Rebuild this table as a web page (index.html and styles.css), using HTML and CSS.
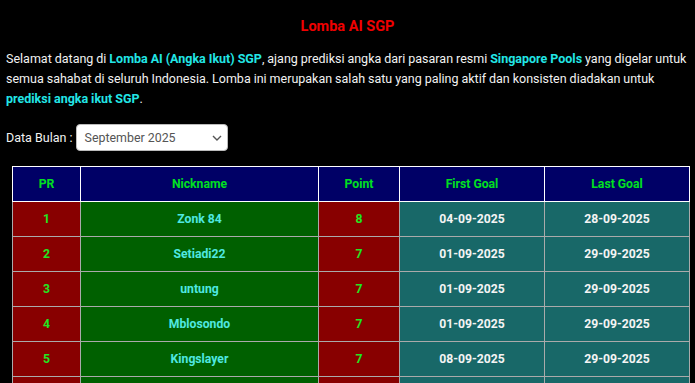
FILE: index.html
```html
<!DOCTYPE html>
<html>
<head>
<meta charset="utf-8">
<link rel="stylesheet" href="styles.css">
</head>
<body>
<div class="page">
  <h1 class="title">Lomba AI SGP</h1>
  <p class="intro">Selamat datang di <b class="hl">Lomba AI (Angka Ikut) SGP</b>, ajang prediksi angka dari pasaran resmi <b class="hl">Singapore Pools</b> yang digelar untuk semua sahabat di seluruh Indonesia. Lomba ini merupakan salah satu yang paling aktif dan konsisten diadakan untuk <b class="hl">prediksi angka ikut SGP</b>.</p>
  <div class="filter">
    <label class="filter-label">Data Bulan :</label>
    <div class="select">
      <span class="select-text">September 2025</span>
      <svg class="chev" width="10" height="6" viewBox="0 0 10 6"><path d="M1 1l4 4 4-4" fill="none" stroke="#555" stroke-width="1.4"/></svg>
    </div>
  </div>
  <table class="rank">
    <thead>
      <tr><th class="c-pr">PR</th><th class="c-nick">Nickname</th><th class="c-pt">Point</th><th class="c-goal">First Goal</th><th class="c-goal">Last Goal</th></tr>
    </thead>
    <tbody>
      <tr><td class="red lime">1</td><td class="green cyan">Zonk 84</td><td class="red lime">8</td><td class="teal white">04-09-2025</td><td class="teal white">28-09-2025</td></tr>
      <tr><td class="red lime">2</td><td class="green cyan">Setiadi22</td><td class="red lime">7</td><td class="teal white">01-09-2025</td><td class="teal white">29-09-2025</td></tr>
      <tr><td class="red lime">3</td><td class="green cyan">untung</td><td class="red lime">7</td><td class="teal white">01-09-2025</td><td class="teal white">29-09-2025</td></tr>
      <tr><td class="red lime">4</td><td class="green cyan">Mblosondo</td><td class="red lime">7</td><td class="teal white">01-09-2025</td><td class="teal white">29-09-2025</td></tr>
      <tr><td class="red lime">5</td><td class="green cyan">Kingslayer</td><td class="red lime">7</td><td class="teal white">08-09-2025</td><td class="teal white">29-09-2025</td></tr>
      <tr><td class="red lime">6</td><td class="green cyan">Agus</td><td class="red lime">6</td><td class="teal white">02-09-2025</td><td class="teal white">27-09-2025</td></tr>
    </tbody>
  </table>
</div>
</body>
</html>
```
FILE: styles.css
```css
html, body {
  margin: 0;
  padding: 0;
  background: #000;
}
body {
  font-family: Roboto, "Liberation Sans", sans-serif;
  color: #f2f2f2;
}
.page {
  padding: 17px 3px 0 6px;
}
.title {
  margin: 0 3px 0 0;
  text-align: center;
  font-size: 14.5px;
  line-height: 20px;
  font-weight: 700;
  color: #f00000;
}
.intro {
  margin: 12px 0 0 0;
  font-size: 12.5px;
  line-height: 20px;
  word-spacing: -0.15px;
}
.hl {
  color: #22e6e6;
  font-weight: 700;
}
.filter {
  display: flex;
  align-items: center;
  gap: 3px;
  margin-top: 15px;
  height: 27px;
}
.filter-label {
  font-size: 12.5px;
}
.select {
  box-sizing: border-box;
  width: 152px;
  height: 27px;
  background: #fff;
  border: 1px solid #bbb;
  border-radius: 4px;
  display: flex;
  align-items: center;
  justify-content: space-between;
  padding: 0 5px 0 8px;
}
.select-text {
  font-size: 12.4px;
  color: #555;
}
.chev {
  display: block;
}
.rank {
  margin: 15px 0 0 6px;
  width: 677px;
  border-collapse: collapse;
  table-layout: fixed;
  font-size: 12.2px;
  font-weight: 700;
}
.rank th {
  height: 34px;
  background: #000066;
  color: #00e020;
  border: 1px solid #fff;
  padding: 0;
  text-align: center;
}
.rank td {
  height: 34px;
  border: 1px solid #aaa;
  padding: 0;
  text-align: center;
}
.c-pr { width: 67px; }
.c-nick { width: 237px; }
.c-pt { width: 80px; }
.c-goal { width: 144px; }
.red { background: #880000; }
.green { background: #006000; }
.teal { background: #186868; }
.lime { color: #22e622; }
.cyan { color: #4fe8e0; }
.white { color: #f4f4f4; }
```
